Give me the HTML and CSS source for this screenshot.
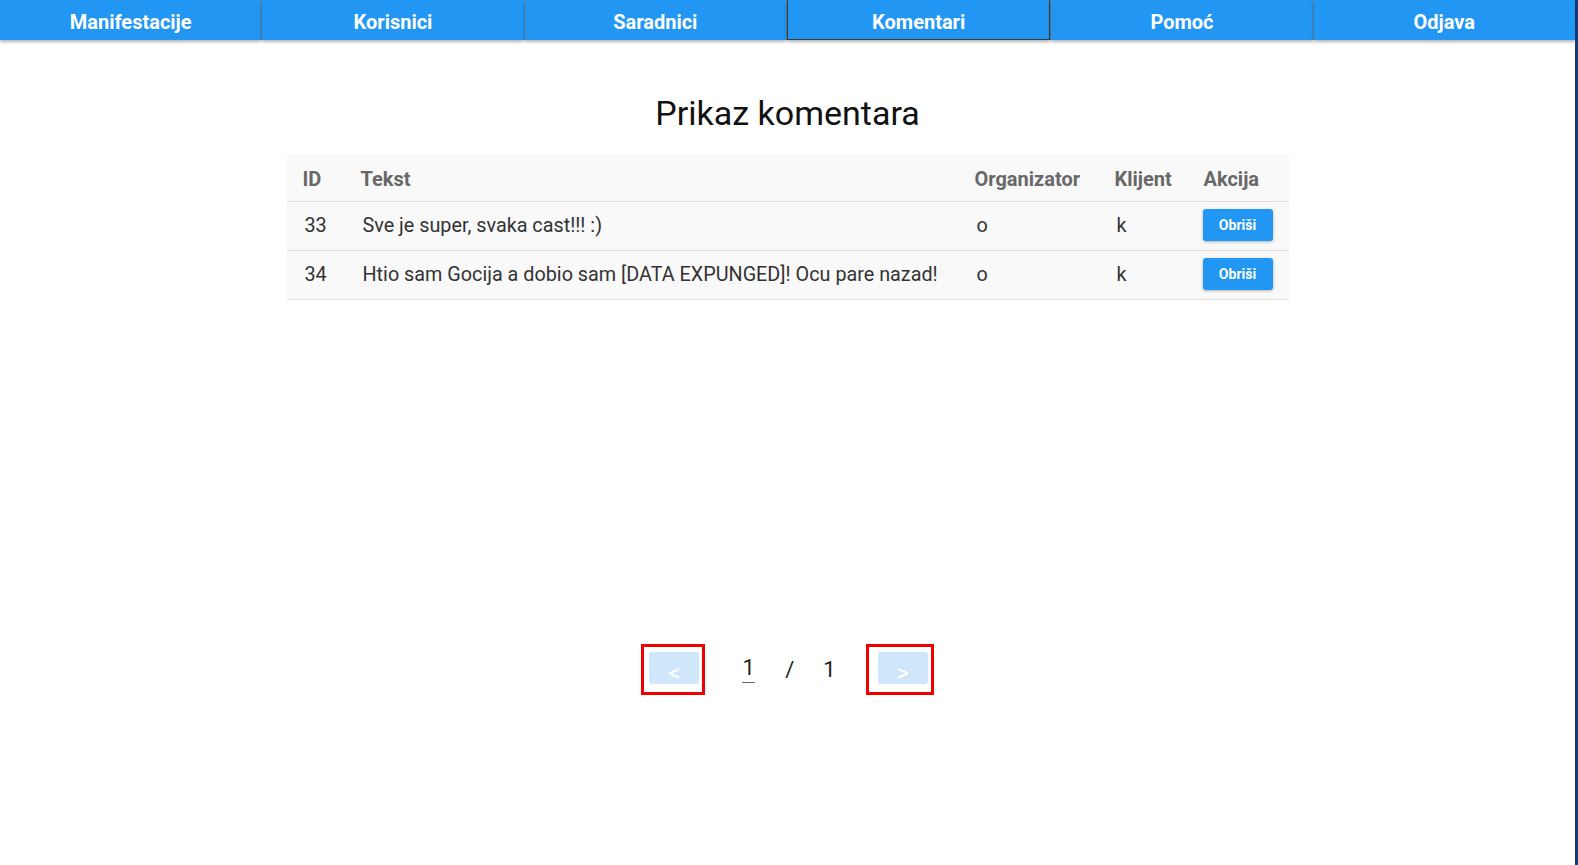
FILE: index.html
```html
<!DOCTYPE html>
<html lang="sr">
<head>
<meta charset="utf-8">
<title>Prikaz komentara</title>
<link rel="stylesheet" href="styles.css">
</head>
<body>
<div class="page">
  <nav class="nav">
    <a class="nav-btn">Manifestacije</a>
    <a class="nav-btn">Korisnici</a>
    <a class="nav-btn">Saradnici</a>
    <a class="nav-btn nav-btn-active">Komentari</a>
    <a class="nav-btn">Pomoć</a>
    <a class="nav-btn">Odjava</a>
  </nav>
  <main class="main">
    <h1 class="title">Prikaz komentara</h1>
    <div class="table-wrap">
      <table class="comments">
        <colgroup>
          <col class="c-id"><col class="c-text"><col class="c-org"><col class="c-cli"><col class="c-act">
        </colgroup>
        <thead>
          <tr><th>ID</th><th>Tekst</th><th>Organizator</th><th>Klijent</th><th>Akcija</th></tr>
        </thead>
        <tbody>
          <tr><td>33</td><td>Sve je super, svaka cast!!! :)</td><td>o</td><td>k</td><td><button class="btn-del">Obriši</button></td></tr>
          <tr><td>34</td><td>Htio sam Gocija a dobio sam [DATA EXPUNGED]! Ocu pare nazad!</td><td>o</td><td>k</td><td><button class="btn-del">Obriši</button></td></tr>
        </tbody>
      </table>
    </div>
    <div class="pager">
      <div class="pager-box pager-prev"><button class="pager-btn">&lt;</button></div>
      <span class="pager-input">1</span>
      <span class="pager-sep">/</span>
      <span class="pager-total">1</span>
      <div class="pager-box pager-next"><button class="pager-btn">&gt;</button></div>
    </div>
  </main>
</div>
</body>
</html>
```
FILE: styles.css
```css
html, body {
  margin: 0;
  padding: 0;
  background: #ffffff;
}
body {
  font-family: Roboto, "Noto Sans", sans-serif;
  color: #333;
}
.page {
  height: 865px;
  box-sizing: border-box;
  border-right: 3px solid #173a78;
  background: #fff;
}
.nav {
  display: flex;
  gap: 1px;
  height: 40px;
  background: #6d8fb0;
}
.nav-btn {
  flex: 1;
  display: flex;
  align-items: center;
  justify-content: center;
  padding-top: 3px;
  box-sizing: border-box;
  background: #2196f3;
  color: #fff;
  font-weight: 700;
  font-size: 20px;
  box-shadow: 0 2px 3px rgba(0, 0, 0, 0.3);
}
.nav-btn-active {
  border: 1px solid #3b3b3b;
  border-top: none;
  padding-top: 4px;
}
.main {
  display: flex;
  flex-direction: column;
  align-items: center;
}
.title {
  margin: 38px 0 0;
  font-size: 34px;
  font-weight: 400;
  line-height: 70px;
  color: #111;
  height: 76px;
}
.table-wrap {
  width: 1002px;
  background: #f9f9f9;
  border-radius: 4px 4px 0 0;
}
.comments {
  width: 100%;
  border-collapse: collapse;
  table-layout: fixed;
}
.c-id { width: 58px; }
.c-text { width: 614px; }
.c-org { width: 140px; }
.c-cli { width: 89px; }
.c-act { width: 101px; }
.comments th {
  box-sizing: border-box;
  height: 47px;
  padding: 4px 0 0 16px;
  text-align: left;
  font-size: 20px;
  font-weight: 700;
  color: #686868;
  border-bottom: 1px solid #dedede;
}
.comments td {
  height: 48px;
  padding: 0 0 0 18px;
  font-size: 19.8px;
  color: #333;
  border-bottom: 1px solid #dedede;
}
.comments td:last-child {
  padding-left: 15px;
}
.btn-del {
  display: block;
  width: 70px;
  height: 32px;
  border: none;
  border-radius: 3px;
  background: #2196f3;
  color: #fff;
  font-family: Roboto, "Noto Sans", sans-serif;
  font-weight: 700;
  font-size: 14px;
  box-shadow: 0 1px 3px rgba(0, 0, 0, 0.3);
  margin-top: -1px;
}
.pager {
  display: flex;
  align-items: center;
  margin-top: 344px;
  font-size: 22px;
  color: #222;
}
.pager-box {
  border: 3px solid #f00000;
  box-sizing: border-box;
  height: 51px;
  display: flex;
}
.pager-prev {
  width: 64px;
  padding: 5px 0 0 5px;
}
.pager-next {
  width: 68px;
  padding: 5px 0 0 9px;
  margin-left: 30px;
}
.pager-btn {
  width: 50px;
  height: 32px;
  border: none;
  border-radius: 3px;
  background: #cfe6fb;
  color: #fff;
  font-family: Roboto, "Noto Sans", sans-serif;
  font-size: 24px;
  line-height: 1;
  padding: 9px 0 0;
}
.pager-input {
  margin-left: 37px;
  width: 13px;
  text-align: center;
  border-bottom: 1px solid #666;
  padding-bottom: 2px;
}
.pager-sep {
  margin-left: 30px;
}
.pager-total {
  margin-left: 29px;
}
```
